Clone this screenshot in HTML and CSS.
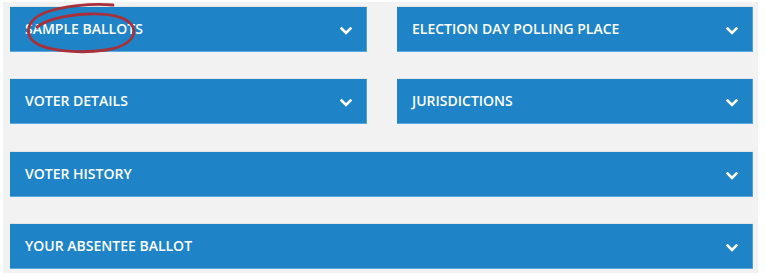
FILE: index.html
```html
<!DOCTYPE html>
<html lang="en">
<head>
<meta charset="utf-8">
<title>Voter information</title>
<link rel="stylesheet" href="styles.css">
</head>
<body>
<div class="panel">
  <div class="grid">
    <div class="bar annotated">
      <span class="label">SAMPLE BALLOTS</span>
      <svg class="chev" width="12" height="8" viewBox="0 0 12 8"><polyline points="1.5,1.5 6,6 10.5,1.5" fill="none" stroke="#fff" stroke-width="2.6" stroke-linecap="square"/></svg>
      <svg class="scribble" width="150" height="60" viewBox="0 0 150 60"><path d="M113,5 C92,3 62,6 44,13 C30,19 24,30 32,40 C43,51 78,54 106,50 C126,47 137,38 133,27 C128,17 110,13 88,14 C66,15 48,19 37,27" fill="none" stroke="#a8303b" stroke-width="2.8" stroke-linecap="round"/></svg>
    </div>
    <div class="bar">
      <span class="label">ELECTION DAY POLLING PLACE</span>
      <svg class="chev" width="12" height="8" viewBox="0 0 12 8"><polyline points="1.5,1.5 6,6 10.5,1.5" fill="none" stroke="#fff" stroke-width="2.6" stroke-linecap="square"/></svg>
    </div>
    <div class="bar">
      <span class="label">VOTER DETAILS</span>
      <svg class="chev" width="12" height="8" viewBox="0 0 12 8"><polyline points="1.5,1.5 6,6 10.5,1.5" fill="none" stroke="#fff" stroke-width="2.6" stroke-linecap="square"/></svg>
    </div>
    <div class="bar">
      <span class="label">JURISDICTIONS</span>
      <svg class="chev" width="12" height="8" viewBox="0 0 12 8"><polyline points="1.5,1.5 6,6 10.5,1.5" fill="none" stroke="#fff" stroke-width="2.6" stroke-linecap="square"/></svg>
    </div>
    <div class="bar wide">
      <span class="label">VOTER HISTORY</span>
      <svg class="chev" width="12" height="8" viewBox="0 0 12 8"><polyline points="1.5,1.5 6,6 10.5,1.5" fill="none" stroke="#fff" stroke-width="2.6" stroke-linecap="square"/></svg>
    </div>
    <div class="bar wide">
      <span class="label">YOUR ABSENTEE BALLOT</span>
      <svg class="chev" width="12" height="8" viewBox="0 0 12 8"><polyline points="1.5,1.5 6,6 10.5,1.5" fill="none" stroke="#fff" stroke-width="2.6" stroke-linecap="square"/></svg>
    </div>
  </div>
</div>
</body>
</html>
```

FILE: styles.css
```css
html, body {
  margin: 0;
  padding: 0;
  background: #ffffff;
}
body {
  font-family: "Open Sans", "Liberation Sans", sans-serif;
}
.panel {
  background: #f2f2f2;
  margin: 2px 7px 3px 3px;
  padding: 5px 5px 4px 7px;
}
.grid {
  display: grid;
  grid-template-columns: 357px 356px;
  column-gap: 30px;
  row-gap: 27px;
}
.bar {
  position: relative;
  height: 45px;
  box-sizing: border-box;
  background: #1e84c7;
  border-right: 1px solid #4e9fd6;
  border-bottom: 1px solid #5ca8da;
  box-shadow: 0 -1px 0 #e4e4e4;
  display: flex;
  align-items: center;
  justify-content: space-between;
  padding: 0 14px 0 15px;
  color: #ffffff;
}
.bar.wide {
  grid-column: 1 / span 2;
}
.grid > .bar:nth-child(5) {
  margin-top: 1px;
}
.label {
  font-size: 14px;
  font-weight: 600;
  letter-spacing: 0;
  line-height: 1;
  margin-top: -1px;
}
.chev {
  display: block;
  margin-top: 3px;
}
.scribble {
  position: absolute;
  left: -10px;
  top: -7px;
  pointer-events: none;
}
```
